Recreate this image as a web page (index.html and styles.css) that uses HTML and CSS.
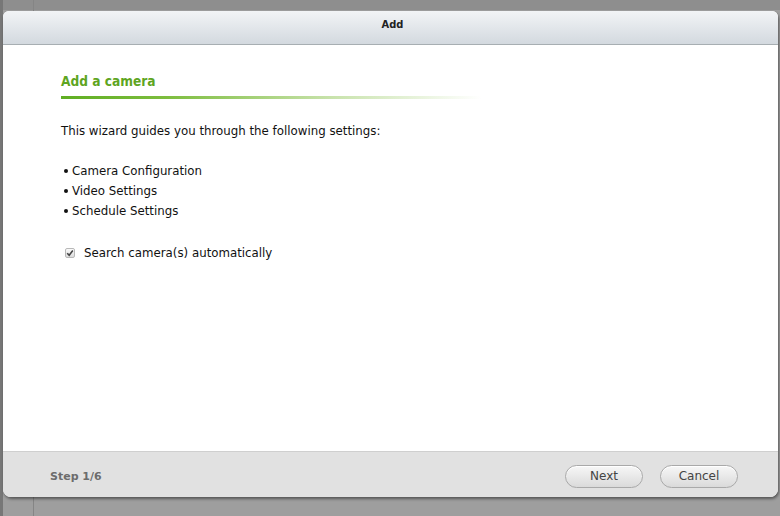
FILE: index.html
```html
<!DOCTYPE html>
<html>
<head>
<meta charset="utf-8">
<link rel="stylesheet" href="styles.css">
</head>
<body>
<div class="desk">
  <div class="dialog">
    <div class="titlebar">Add</div>
    <div class="content">
      <h1 class="heading">Add a camera</h1>
      <div class="rule"></div>
      <p class="intro">This wizard guides you through the following settings:</p>
      <ul class="steps">
        <li>Camera Configuration</li>
        <li>Video Settings</li>
        <li>Schedule Settings</li>
      </ul>
      <label class="check">
        <span class="box"><svg width="8" height="8" viewBox="0 0 8 8"><path d="M1.2 4.2 L3.2 6.2 L6.8 1.6" fill="none" stroke="#444" stroke-width="1.6"/></svg></span>
        <span>Search camera(s) automatically</span>
      </label>
    </div>
    <div class="footer">
      <span class="step">Step 1/6</span>
      <div class="buttons">
        <button class="btn">Next</button>
        <button class="btn">Cancel</button>
      </div>
    </div>
  </div>
</div>
</body>
</html>
```
FILE: styles.css
```css
html, body {
  margin: 0;
  padding: 0;
}
body {
  width: 780px;
  height: 516px;
  overflow: hidden;
  background:
    linear-gradient(to right, #777 0, #777 3px, transparent 3px),
    linear-gradient(to right, transparent 33px, #858585 33px, #858585 34px, transparent 34px),
    linear-gradient(to bottom, #8e8e8e 0, #8e8e8e 10px, #9e9e9e 10px);
  font-family: "DejaVu Sans", Verdana, sans-serif;
}
.desk {
  padding: 11px 0 0 3px;
}
.dialog {
  width: 775px;
  height: 486px;
  display: flex;
  flex-direction: column;
  background: #fff;
  border-radius: 6px 6px 8px 8px;
  box-shadow: 1px 2px 3px rgba(0,0,0,0.45);
  overflow: hidden;
}
.titlebar {
  height: 34px;
  flex: none;
  display: flex;
  align-items: flex-start;
  justify-content: center;
  box-sizing: border-box;
  padding: 7px 0 0 4px;
  line-height: 14px;
  font-family: "DejaVu Sans Condensed", "DejaVu Sans", sans-serif;
  font-size: 11px;
  font-weight: bold;
  color: #222;
  background: linear-gradient(to bottom, #f2f4f6, #d3d9df);
  border-bottom: 1px solid #a7aeb2;
}
.content {
  flex: 1;
  padding: 26px 0 0 58px;
  color: #111;
  font-size: 11.8px;
}
.heading {
  margin: 0;
  font-family: "DejaVu Sans Condensed", "DejaVu Sans", sans-serif;
  font-size: 13.6px;
  font-weight: bold;
  color: #5ea51f;
  line-height: 20px;
}
.rule {
  margin-top: 5px;
  width: 420px;
  height: 3px;
  background: linear-gradient(to right, #5fae22 0, #7dbd3e 25%, #c9e3ad 65%, rgba(255,255,255,0) 100%);
}
.intro {
  margin: 24px 0 0;
  line-height: 16px;
}
.steps {
  list-style: none;
  margin: 22px 0 0;
  padding: 0;
}
.steps li {
  line-height: 20px;
}
.steps li::before {
  content: "";
  display: inline-block;
  width: 4px;
  height: 4px;
  border-radius: 50%;
  background: #111;
  vertical-align: middle;
  margin: 0 4px 2px 3px;
}
.check {
  display: flex;
  align-items: center;
  margin-top: 25px;
  line-height: 14px;
  gap: 9px;
}
.box {
  width: 8px;
  height: 8px;
  margin-left: 4px;
  border: 1px solid #b8b8b8;
  border-radius: 2px;
  background: linear-gradient(#fafafa, #dcdcdc);
  display: flex;
  align-items: center;
  justify-content: center;
}
.footer {
  height: 46px;
  flex: none;
  display: flex;
  align-items: center;
  justify-content: space-between;
  box-sizing: border-box;
  background: #e1e1e1;
  border-top: 1px solid #cfcfcf;
  padding: 3px 40px 0 47px;
}
.step {
  font-size: 11px;
  font-weight: bold;
  color: #6c6c6c;
}
.buttons {
  display: flex;
  gap: 17px;
}
.btn {
  width: 78px;
  height: 23px;
  border: 1px solid #a9a9a9;
  border-radius: 12px;
  background: linear-gradient(to bottom, #f7f7f7, #dadada);
  font-family: "DejaVu Sans", Verdana, sans-serif;
  font-size: 12px;
  color: #444;
  padding: 0;
  box-shadow: inset 0 1px 0 #fff;
}
```
